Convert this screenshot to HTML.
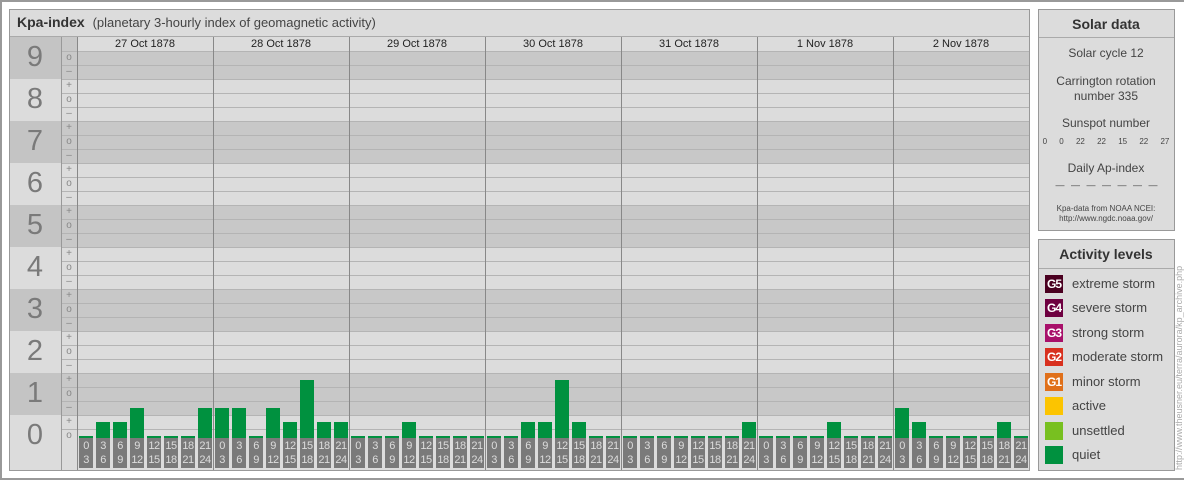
<!DOCTYPE html><html><head><meta charset="utf-8"><style>
*{margin:0;padding:0;box-sizing:border-box}
body{width:1184px;height:480px;background:#fff;position:relative;overflow:hidden;font-family:"Liberation Sans",sans-serif;color:#333}
.a{position:absolute}
.frame{left:0;top:0;width:1184px;height:480px;border:2px solid #999;border-right:none}
.panel{background:#dcdcdc;border:1px solid #999}
.bar{position:absolute;background:#00913f;width:14px}
.lab{position:absolute;background:#7a7a7a;color:#ddd;width:14px;height:30px;top:438px;font-size:11px;line-height:14px;text-align:center;letter-spacing:-0.5px;padding-top:1px}
.num{position:absolute;left:9px;width:52px;text-align:center;font-size:29px;color:#7a7a7a}
.tick{position:absolute;left:61px;width:16px;text-align:center;font-size:10px;color:#888;line-height:14px}
.leg{position:absolute;left:1045px;height:18px;width:18px;color:#fff;font-size:12px;font-weight:bold;line-height:18px;text-align:center;letter-spacing:-1px}
.lt{position:absolute;left:1072px;font-size:13px;color:#444;line-height:18px}
.c{position:absolute;left:1038px;width:136px;text-align:center;color:#444}
</style></head><body>
<div class="a frame"></div>
<div class="a panel" style="left:9px;top:9px;width:1021px;height:462px"></div>
<div class="a" style="left:10px;top:10px;width:1019px;height:27px;background:#dcdcdc;border-bottom:1px solid #aaa"></div>
<div class="a" style="left:17px;top:14px;font-size:14px;font-weight:bold;color:#333">Kpa-index <span style="font-weight:normal;font-size:13px;color:#444;margin-left:4px">(planetary 3-hourly index of geomagnetic activity)</span></div>
<div id="chart"></div>
<div class="a panel" style="left:1038px;top:9px;width:137px;height:222px"></div>
<div class="a" style="left:1039px;top:10px;width:135px;height:28px;border-bottom:1px solid #aaa"></div>
<div class="c" style="top:16px;font-size:14px;font-weight:bold;color:#333">Solar data</div>
<div class="c" style="top:46px;font-size:12px">Solar cycle 12</div>
<div class="c" style="top:74px;font-size:12px;line-height:15px">Carrington rotation<br>number 335</div>
<div class="c" style="top:116px;font-size:12px">Sunspot number</div>
<div class="c" style="top:137px;font-size:8px;word-spacing:10px">0 0 22 22 15 22 27</div>
<div class="c" style="top:180px;font-size:9px;word-spacing:6px;letter-spacing:-1px">&mdash; &mdash; &mdash; &mdash; &mdash; &mdash; &mdash;</div>
<div class="c" style="top:161px;font-size:12px">Daily Ap-index</div>
<div class="c" style="top:204px;font-size:8px;line-height:10px">Kpa-data from NOAA NCEI:<br>http://www.ngdc.noaa.gov/</div>
<div class="a panel" style="left:1038px;top:239px;width:137px;height:232px"></div>
<div class="a" style="left:1039px;top:240px;width:135px;height:29px;border-bottom:1px solid #aaa"></div>
<div class="c" style="top:246px;font-size:14px;font-weight:bold;color:#333">Activity levels</div>
<div class="leg" style="top:275px;background:#4a0020">G5</div><div class="lt" style="top:275px">extreme storm</div>
<div class="leg" style="top:299px;background:#6e0040">G4</div><div class="lt" style="top:299px">severe storm</div>
<div class="leg" style="top:324px;background:#a8106a">G3</div><div class="lt" style="top:324px">strong storm</div>
<div class="leg" style="top:348px;background:#d8301e">G2</div><div class="lt" style="top:348px">moderate storm</div>
<div class="leg" style="top:373px;background:#e0701a">G1</div><div class="lt" style="top:373px">minor storm</div>
<div class="leg" style="top:397px;background:#fcc400"></div><div class="lt" style="top:397px">active</div>
<div class="leg" style="top:422px;background:#78c020"></div><div class="lt" style="top:422px">unsettled</div>
<div class="leg" style="top:446px;background:#00913f"></div><div class="lt" style="top:446px">quiet</div>
<div class="a" style="left:1174px;top:470px;transform:rotate(-90deg);transform-origin:0 0;font-size:9px;color:#aaa;white-space:nowrap">http://www.theusner.eu/terra/aurora/kp_archive.php</div>
<script>
var h='';
for(var k=9;k>=0;k--){
 var t,b;
 if(k==9){t=37;b=79}else if(k==0){t=415;b=470}else{t=415-k*42;b=t+42}
 var dark=k%2==1;
 h+='<div class="a" style="left:10px;top:'+t+'px;width:51px;height:'+(b-t)+'px;background:'+(dark?'#c4c4c4':'#dcdcdc')+'"></div>';
 h+='<div class="a" style="left:61px;top:'+t+'px;width:968px;height:'+(b-t)+'px;background:'+(dark?'#c8c8c8':'#dcdcdc')+'"></div>';
 h+='<div class="num" style="top:'+(k==0?419:t+4)+'px">'+k+'</div>';
}
h+='<div class="a" style="left:77px;top:37px;width:952px;height:14px;background:#dcdcdc"></div>';
for(var y=51;y<=429;y+=14){h+='<div class="a" style="left:61px;top:'+y+'px;width:968px;height:1px;background:#b4b4b4"></div>';}
for(var i=0;i<28;i++){var y=429-14*i;
 var ss=(i%3==0)?'o':(i%3==1?'+':'\u2013');
 h+='<div class="tick" style="top:'+y+'px">'+ss+'</div>';}
h+='<div class="a" style="left:61px;top:37px;width:1px;height:433px;background:#999"></div>';
var dates=['27 Oct 1878','28 Oct 1878','29 Oct 1878','30 Oct 1878','31 Oct 1878','1 Nov 1878','2 Nov 1878'];
var data=[[0,1,1,2,0,0,0,2],[2,2,0,2,1,4,1,1],[0,0,0,1,0,0,0,0],[0,0,1,1,4,1,0,0],[0,0,0,0,0,0,0,1],[0,0,0,0,1,0,0,0],[2,1,0,0,0,0,1,0]];
var l1=['0','3','6','9','12','15','18','21'],l2=['3','6','9','12','15','18','21','24'];
for(var d=0;d<7;d++){var x=77+136*d;
 h+='<div class="a" style="left:'+x+'px;top:37px;width:1px;height:433px;background:#888"></div>';
 h+='<div class="a" style="left:'+x+'px;top:37px;width:136px;text-align:center;font-size:11px;color:#222;line-height:15px">'+dates[d]+'</div>';
 for(var s=0;s<8;s++){var bx=x+2+17*s;var n=data[d][s];var tp=436-14*n;
  h+='<div class="bar" style="left:'+bx+'px;top:'+tp+'px;height:'+(438-tp)+'px"></div>';
  h+='<div class="lab" style="left:'+bx+'px">'+l1[s]+'<br>'+l2[s]+'</div>';}
}
document.getElementById('chart').innerHTML=h;
</script>
</body></html>
